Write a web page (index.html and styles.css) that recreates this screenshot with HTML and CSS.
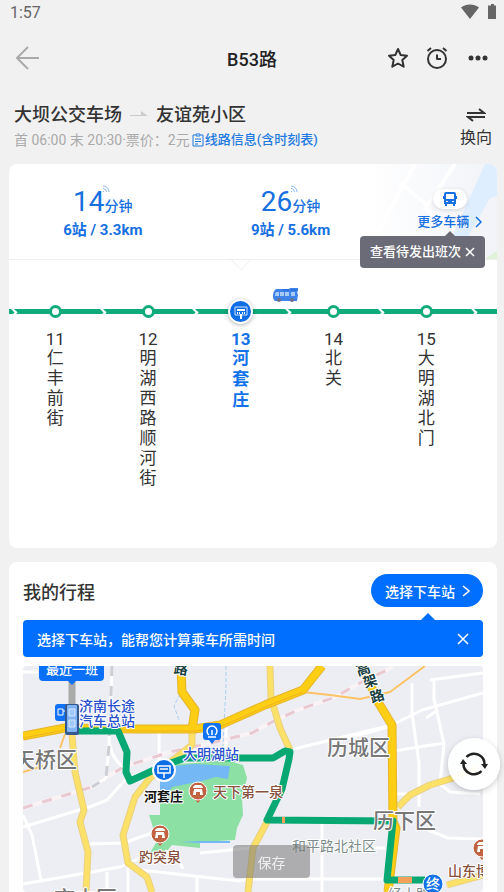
FILE: index.html
```html
<!DOCTYPE html>
<html lang="zh-CN">
<head>
    <meta charset="UTF-8">
    <meta name="viewport" content="width=device-width, initial-scale=1.0">
    <title>B53路</title>
    <link rel="stylesheet" href="styles.css">
</head>
<body>
    <div class="status-bar">
        <span>1:57</span>
        <svg class="status-icons" width="36" height="18" viewBox="0 0 36 18">
            <path d="M1 4.500C6 .5 14 .5 19 4.500L10 16z"/>
            <path d="M29 2.500h2V1h3v1.500h2V16h-8V2.500z"/>
        </svg>
    </div>

    <header class="nav-bar">
        <button class="icon-btn back" aria-label="返回">
            <svg width="24" height="24" viewBox="0 0 24 24"><path d="M12 1 1 12l11 11M1 12h22"/></svg>
        </button>
        <h1>B53路</h1>
        <div class="nav-actions">
            <button class="icon-btn" aria-label="收藏">
                <svg width="22" height="22" viewBox="0 0 22 22"><path d="m11 2 2.700 6 6.300.7-4.700 4.300 1.400 6.700L11 16.500 5.300 19.700l1.400-6.700L2 8.700 8.300 8z"/></svg>
            </button>
            <button class="icon-btn" aria-label="提醒">
                <svg width="22" height="22" viewBox="0 0 22 22"><circle cx="11" cy="12" r="9"/><path d="M11 7.500V12h4M1.500 4 5 1M20.500 4 17 1"/></svg>
            </button>
            <button class="icon-btn dots" aria-label="更多">
                <svg width="20" height="22" viewBox="0 0 20 22"><circle cx="3" cy="11" r="2.500"/><circle cx="10" cy="11" r="2.500"/><circle cx="17" cy="11" r="2.500"/></svg>
            </button>
        </div>
    </header>

    <section class="route">
        <div class="route-info">
            <h2 class="route-name">
                大坝公交车场
                <svg width="18" height="8" viewBox="0 0 18 8"><path d="M0 4h11V0l7 5H0z"/></svg>
                友谊苑小区
            </h2>
            <p class="route-meta">
                <span>首 06:00 末 20:30·票价：2元</span>
                <a href="#timetable" class="route-link"><svg width="12" height="14" viewBox="0 0 12 14"><path d="M3.500 2H1v11h10V2H8.500M4 1h4v2H4zM3 6h6M3 8.500h6M3 11h3"/></svg>线路信息(含时刻表)</a>
            </p>
        </div>
        <button class="swap">
            <svg width="20" height="14" viewBox="0 0 20 14"><path d="M1 5h17l-5-4M19 9H2l5 4"/></svg>
            换向
        </button>
    </section>

    <section class="card line-card">
        <div class="arrivals">
            <svg class="arrivals-bg" width="130" height="95" viewBox="0 0 130 95">
                <defs>
                    <linearGradient id="fade"><stop offset="0" stop-color="#fff"/><stop offset="1" stop-color="#f1f3f8"/></linearGradient>
                </defs>
                <rect width="130" height="95" fill="url(#fade)"/>
                <path d="M48 0 10 69M33 19l27 22M88 0 58 45l30 20" fill="none" stroke="#fff" stroke-width="4"/>
                <path d="M118 0h12v32l-7 2-35 61H75z" fill="#deeeff"/>
                <path d="m118 95 12-8v8z" fill="#e0f2d8"/>
            </svg>
            <button class="arrival">
                <span class="arrival-time"><b>14</b>分钟<svg class="signal" width="8" height="8" viewBox="0 0 8 8"><path d="M1 1a6 6 0 0 1 6 6M1 3.500A3.500 3.500 0 0 1 4.500 7M1 6l1 1"/></svg></span>
                <span class="arrival-dist">6站 / 3.3km</span>
            </button>
            <button class="arrival">
                <span class="arrival-time"><b>26</b>分钟<svg class="signal" width="8" height="8" viewBox="0 0 8 8"><path d="M1 1a6 6 0 0 1 6 6M1 3.500A3.500 3.500 0 0 1 4.500 7M1 6l1 1"/></svg></span>
                <span class="arrival-dist">9站 / 5.6km</span>
            </button>
            <button class="more">
                <span class="more-pill">
                    <svg width="14" height="14" viewBox="0 0 14 14"><path fill-rule="evenodd" d="M3 0h8q2 0 2 2v2h1v3h-1v5h-1v2h-2v-2H4v2H2v-2H1V7H0V4h1V2q0-2 2-2zM3 2v5h8V2zM3 9v1h2V9zM9 9v1h2V9z"/></svg>
                </span>
                <span class="more-text">更多车辆<svg width="7" height="12" viewBox="0 0 7 12"><path d="m1 1 5 5-5 5"/></svg></span>
            </button>
            <div class="tooltip">
                查看待发出班次
                <button class="close" aria-label="关闭"><svg width="10" height="10" viewBox="0 0 10 10"><path d="m1 1 8 8M9 1 1 9"/></svg></button>
            </div>
        </div>

        <div class="line">
            <svg class="bus" width="26" height="15" viewBox="0 0 26 15">
                <path d="M3 1h13l1-1h8v3l-1 1 1 3-1 6H2q-2-1-2-5 0-5 3-7z" fill="#3f83ea"/>
                <path d="M3 4h3v4H2q0-3 1-4zM7 4h4v4H7zM12 4h4v4h-4zM18 4h4v4h-4z" fill="#a9cbfa"/>
                <path d="M10 2h6M18 2h6" stroke="#1c62d8"/>
                <circle cx="6" cy="12" r="2" fill="#6b6f8c"/><circle cx="19" cy="12" r="2" fill="#6b6f8c"/>
            </svg>
            <ol class="stops">
                <li class="stop"><i class="dot"></i><span class="num">11</span><span class="name">仁丰前街</span></li>
                <li class="stop"><i class="dot"></i><span class="num">12</span><span class="name">明湖西路顺河街</span></li>
                <li class="stop current">
                    <i class="dot"><svg width="14" height="14" viewBox="0 0 14 14"><path d="M1 2h12v8H1z" fill="none" stroke="#cfe2ff"/><path d="M3 4h8v2H3zM3 7h1v2H3zM5 7h1v2H5zM8 7h1v2H8zM10 7h1v2h-1zM6 9h2v5H6z" fill="#fff"/></svg></i>
                    <span class="num">13</span><span class="name">河套庄</span>
                </li>
                <li class="stop"><i class="dot"></i><span class="num">14</span><span class="name">北关</span></li>
                <li class="stop"><i class="dot"></i><span class="num">15</span><span class="name">大明湖北门</span></li>
            </ol>
        </div>
    </section>

    <section class="card trip-card">
        <div class="trip-head">
            <h2>我的行程</h2>
            <button class="pick">选择下车站<svg width="8" height="12" viewBox="0 0 8 12"><path d="m1 1 6 5-6 5"/></svg></button>
        </div>
        <div class="tip">
            选择下车站，能帮您计算乘车所需时间
            <button class="close" aria-label="关闭"><svg width="12" height="12" viewBox="0 0 12 12"><path d="m1 1 10 10M11 1 1 11"/></svg></button>
        </div>
        <svg class="map" viewBox="0 0 460 226" preserveAspectRatio="xMidYMin slice">
            <!-- 公园和湖 -->
            <path class="park" d="M137 117 152 98l55-3 13 4 4 13-5 20 1 17-6 13-2 12-35 2v6l-28-3-6 7-16 1 7-12-6-20-2-6h11z"/>
            <path class="lake" d="M137 108l15-8 20-2 35 2-2 13-12-2-14 4-30 6-8 14h-4z"/>
            <path class="lake" d="m157 176 20-1 30 0v2h-30z"/>

            <!-- 小路 -->
            <g class="road minor">
                <path d="M0 161 69 140l15-6 18-20 20-9M0 149l9 20 9 45M0 218l97-17 20-9M65 178l36-1 36-13M84 206v20M105 200v26M136 65v30M203 62v22M0 6h15"/>
                <path d="M142 185q14 6 18 18M117 204l54 6 45 5 10-2h81M174 212v14M177 187l60-6M299 157v69M267 84l102-25 30-15 61-17M307 77l65-18"/>
                <path d="M389 17v30l7 50v44M371 85l50-8M411 13v20l10 45-4 40 10 8 30 2M407 14l53-7M369 128h22M405 164l20 8 35 1M307 213h58M342 182h20M403 52l12-8M373 100v12"/>
            </g>

            <!-- 铁路 -->
            <path class="rail" d="M0 142 69 121l31-20 47-15 45-10 37-9 20-11 26-12 37-13 25-14 27-13 6-4"/>
            <path class="rail-dash" d="M0 142 69 121l31-20 47-15 45-10 37-9 20-11 26-12 37-13 25-14 27-13 6-4"/>
            <path class="rail thin" d="m89 0-3 80-3 32-14 9M86 70q0 20 14 31"/>
            <path class="rail-dash grey" d="m89 0-3 80-3 32-14 9"/>
            <path class="stream" d="M203 0v20l-3 60M157 28l-6 12 5 14"/>

            <!-- 主干道 -->
            <g class="road edge">
                <path d="m49 69 3 37 9 38-4 12 8 30-2 40M169 61v18l-42 33-15 19-12 38 5 28 19 14 5 15M247 0l1 32 9 30 10 22M244 156l-14 26-5 44M375 141l12-12 20-10 20-6 27-11M424 219l36-10"/>
            </g>
            <g class="road light">
                <path d="m49 69 3 37 9 38-4 12 8 30-2 40M169 61v18l-42 33-15 19-12 38 5 28 19 14 5 15M247 0l1 32 9 30 10 22M244 156l-14 26-5 44M375 141l12-12 20-10 20-6 27-11M424 219l36-10"/>
            </g>
            <path class="orange" d="m42 68-5 14M280 26l27 3 30 4 30-7 35-26M0 106l20-6"/>
            <g class="road trunk-edge"><path d="m0 70 42-8 71 1h59l25-4 45-20 38-15 19-24M158 0l1 26 13 18-3 20M339 0l16 36 14 23 1 97 3 6-8 64"/></g>
            <g class="road trunk"><path d="m0 70 42-8 71 1h59l25-4 45-20 38-15 19-24M158 0l1 26 13 18-3 20M339 0l16 36 14 23 1 97 3 6-8 64"/></g>
            <path class="trunk-line" d="m0 72 42-8 71 1h59l25-4 45-20 38-15"/>

            <!-- 公交线路 -->
            <path class="walked" d="M49 14v30"/>
            <path class="path" d="M55 65h40l9 21-1 20 4 9 35-16 20-7h88l12-7 5 1-1 7-7 30-15 31 126 1-6 59h38"/>
            <path class="slow" d="M259 154h3M375 214h14"/>

            <!-- 地名 -->
            <g class="area">
                <text x="-9" y="101">天桥区</text>
                <text x="304" y="89">历城区</text>
                <text x="350" y="162">历下区</text>
                <text x="31" y="240">市中区</text>
            </g>
            <text class="street" x="269" y="185">和平路北社区</text>
            <text class="street" x="365" y="233">经十路</text>
            <g class="highway">
                <text x="151" y="8" transform="rotate(8 158 3)">路</text>
                <text x="333" y="8" transform="rotate(-18 340 3)">高</text>
                <text x="340" y="20" transform="rotate(-18 347 15)">架</text>
                <text x="347" y="35" transform="rotate(-18 354 30)">路</text>
            </g>
            <g class="station">
                <text x="56" y="45">济南长途</text>
                <text x="56" y="60">汽车总站</text>
                <text x="160" y="93">大明湖站</text>
            </g>
            <g class="sight">
                <text x="190" y="131">天下第一泉</text>
                <text x="116" y="196">趵突泉</text>
                <text x="425" y="210">山东博物馆</text>
            </g>
            <text class="here" x="121" y="135">河套庄</text>

            <!-- 景点 -->
            <g id="temple">
                <path d="m170 131 5 6 5-6z" fill="#c16340"/>
                <circle cx="175" cy="125" r="9" fill="#c16340" stroke="#fff"/>
                <path d="m170 121 2-2h6l2 2v1h-10zM171 123h8l1 6h-3v-3h-4v3h-3z" fill="#fff"/>
            </g>
            <use href="#temple" x="-38" y="43"/>
            <use href="#temple" x="284" y="57"/>

            <!-- 车站标记 -->
            <path d="M183 57h12q3 0 3 3v11q0 3-3 3h-3l-3 4-3-4h-3q-3 0-3-3V60q0-3 3-3z" fill="#1272f5"/>
            <path d="M186 69a5 5 0 1 1 6 0M189 64v5M185 71h8" fill="none" stroke="#fff" stroke-width="1.500"/>
            <rect x="32" y="38" width="16" height="17" rx="3" fill="#1272f5"/>
            <path d="M35 43h5v6h-5zM40 45h3" fill="none" stroke="#fff"/>
            <circle cx="141" cy="104" r="11" fill="#0f6de6" stroke="#fff" stroke-width="2"/>
            <path d="M135 100h12v7h-12zM137 103h8M141 107v5" fill="none" stroke="#fff" stroke-width="1.500"/>

            <!-- 最近的车 -->
            <rect x="42" y="38" width="14" height="31" rx="2" fill="#35598f"/>
            <rect x="44" y="39" width="10" height="27" rx="1" fill="#82b5f8"/>
            <path d="M46 43h6v7h-6zM46 54h6v7h-6z" fill="#9fc8ff" stroke="#d6e7ff"/>
            <path d="M16-9h65v20q0 4-4 4H53l-4 4-4-4H20q-4 0-4-4z" fill="#0a70fa"/>
            <text class="next-bus" x="23" y="8">最近一班</text>

            <circle cx="410" cy="218" r="10" fill="#1272e8" stroke="#fff"/>
            <text class="end" x="403" y="223">终</text>
        </svg>
    </section>

    <button class="refresh" aria-label="刷新">
        <svg width="28" height="28" viewBox="0 0 28 28"><path d="M6.500 7A10.500 10.500 0 0 1 24.500 15M21.500 21A10.500 10.500 0 0 1 3.500 13" fill="none" stroke="#222" stroke-width="2.500"/><path d="M21 14h7l-3 5zM0 14h7l-4-5z" fill="#222"/></svg>
    </button>
    <button class="save">保存</button>
</body>
</html>
```

FILE: styles.css
```css
* {
    box-sizing: border-box;
}
body {
    display: flex;
    flex-direction: column;
    height: 100vh;
    margin: 0;
    overflow: hidden;
    background: #f1f1f1;
    color: #333;
    font-family: Roboto, "Noto Sans CJK SC", sans-serif;
    font-size: 14px;
}
h1, h2, p, ol {
    margin: 0;
    padding: 0;
}
h1, h2 {
    font-size: 18px;
    font-weight: 500;
}
button {
    padding: 0;
    border: none;
    background: none;
    color: inherit;
    font: inherit;
    cursor: pointer;
}
svg {
    display: block;
    flex: none;
}

/* 顶部 */
.status-bar {
    display: flex;
    justify-content: space-between;
    height: 32px;
    padding: 3px 8px 0 10px;
    color: #666;
    font-size: 16px;
    line-height: 20px;
}
.status-icons {
    fill: #666;
}
.nav-bar {
    display: grid;
    grid-template-columns: 1fr auto 1fr;
    align-items: center;
    height: 52px;
    padding: 0 16px;
}
.nav-bar h1 {
    color: #222;
}
.nav-actions {
    display: flex;
    justify-content: flex-end;
    gap: 17px;
}
.icon-btn svg {
    fill: none;
    stroke: #333;
    stroke-width: 2;
    stroke-linejoin: round;
}
.icon-btn.back {
    justify-self: start;
}
.icon-btn.back svg {
    stroke: #aaa;
}
.icon-btn.dots {
    padding-left: 3px;
}
.icon-btn.dots svg {
    fill: #333;
    stroke: none;
}

/* 线路信息 */
.route {
    display: flex;
    justify-content: space-between;
    height: 80px;
    padding: 18px 12px 0 14px;
}
.route-name {
    display: flex;
    align-items: center;
    gap: 8px;
    line-height: 26px;
}
.route-name svg {
    fill: #ccc;
}
.route-meta {
    display: flex;
    align-items: center;
    gap: 2px;
    color: #aaa;
    line-height: 24px;
}
.route-link {
    display: flex;
    align-items: center;
    gap: 1px;
    color: #1f7be0;
    font-size: 13px;
    font-weight: 500;
    text-decoration: none;
}
.route-link svg {
    fill: none;
    stroke: #1f7be0;
}
.swap {
    display: flex;
    flex-direction: column;
    align-items: center;
    gap: 4px;
    padding-top: 6px;
    font-size: 16px;
    line-height: 24px;
}
.swap svg {
    fill: none;
    stroke: #333;
    stroke-width: 2;
}

.card {
    margin: 0 7px 14px 9px;
    border-radius: 8px;
    background: #fff;
}

/* 到站时间 */
.arrivals {
    position: relative;
    display: grid;
    grid-template-columns: 5fr 5fr 3fr;
    height: 96px;
    border-bottom: 1px solid #f0f0f0;
    color: #1670e0;
}
.arrivals-bg {
    position: absolute;
    top: 0;
    right: 0;
    border-top-right-radius: 8px;
}
.arrival {
    display: flex;
    flex-direction: column;
    align-items: center;
    padding-top: 23px;
}
.arrival-time {
    position: relative;
    font-weight: 500;
    line-height: 30px;
}
.arrival-time b {
    font-size: 28px;
    font-weight: 400;
}
.signal {
    position: absolute;
    top: -2px;
    left: 29px;
    fill: none;
    stroke: #8dbaf0;
}
.arrival-dist {
    font-size: 15px;
    font-weight: 700;
    line-height: 18px;
}
.more {
    position: relative;
    display: flex;
    flex-direction: column;
    align-items: center;
    gap: 3px;
    padding: 25px 2px 0 20px;
}
.more-pill {
    padding: 3px 10px;
    border-radius: 10px;
    background: #fff;
    box-shadow: 0 1px 4px rgba(0, 0, 0, 0.15);
}
.more-pill svg {
    fill: #1670e0;
}
.more-text {
    display: flex;
    align-items: center;
    gap: 6px;
    font-size: 13px;
    font-weight: 500;
    line-height: 20px;
}
.more-text svg,
.close svg,
.pick svg {
    fill: none;
    stroke: currentColor;
    stroke-width: 1.5px;
}
.tooltip {
    position: absolute;
    top: 72px;
    right: 12px;
    z-index: 1;
    display: flex;
    align-items: center;
    gap: 4px;
    height: 32px;
    padding: 0 10px;
    border-radius: 4px;
    background: #6b6b78;
    color: #fff;
    font-size: 13px;
    font-weight: 500;
    line-height: 16px;
}
.tooltip::before,
.tip::before {
    content: "";
    position: absolute;
    bottom: 100%;
    border: 5px solid transparent;
    border-top: none;
    border-bottom-color: #6b6b78;
}
.tooltip::before {
    right: 30px;
}

/* 站点列表 */
.line {
    position: relative;
    height: 288px;
    padding-top: 38px;
    overflow: hidden;
}
.line::before {
    content: "";
    position: absolute;
    top: -9px;
    left: 46%;
    width: 14px;
    height: 14px;
    border: 1px solid #f0f0f0;
    background: #fff;
    transform: rotate(45deg);
}
.bus {
    position: absolute;
    top: 28px;
    left: 54%;
}
.stops {
    display: grid;
    grid-template-columns: repeat(5, 19%);
    background: linear-gradient(#0fab7a, #0fab7a) 0 11px / 100% 5px no-repeat;
    list-style: none;
}
.stop {
    position: relative;
    display: flex;
    flex-direction: column;
    align-items: center;
    font-size: 17px;
    line-height: 20px;
}
.stop::after,
.stop:first-child::before {
    content: "";
    position: absolute;
    top: 11px;
    right: -3px;
    width: 5px;
    height: 5px;
    border: solid #fff;
    border-width: 2px 2px 0 0;
    transform: rotate(45deg);
}
.stop:first-child::before {
    right: auto;
    left: 0;
}
.dot {
    width: 13px;
    height: 13px;
    margin: 7px 0;
    border: 3px solid #0fab7a;
    border-radius: 50%;
    background: #fff;
}
.num {
    margin-top: 5px;
    line-height: 18px;
}
.name {
    width: 17px;
    text-align: center;
    word-break: break-all;
}
.current {
    color: #1272ea;
    font-weight: 700;
}
.current .dot {
    display: grid;
    place-items: center;
    width: 25px;
    height: 25px;
    margin: 1px 0;
    border: 2px solid #fff;
    background: #0f6de6;
    box-shadow: 0 1px 4px rgba(0, 0, 0, 0.3);
}
.current .name {
    line-height: 21px;
}

/* 我的行程 */
.trip-card {
    display: flex;
    flex: 1;
    flex-direction: column;
    min-height: 0;
    margin-bottom: 0;
    padding: 12px 14px 0;
    border-radius: 8px 8px 0 0;
}
.trip-head {
    display: flex;
    align-items: center;
    justify-content: space-between;
    margin-bottom: 13px;
}
.pick {
    display: flex;
    align-items: center;
    gap: 7px;
    height: 33px;
    padding: 0 13px 0 14px;
    border-radius: 17px;
    background: #006eff;
    color: #fff;
    font-weight: 500;
}
.tip {
    position: relative;
    display: flex;
    align-items: center;
    justify-content: space-between;
    flex: none;
    height: 37px;
    margin-bottom: 9px;
    padding: 0 14px;
    border-radius: 4px;
    background: #006eff;
    color: #fff;
    font-weight: 500;
}
.tip::before {
    right: 48px;
    border-width: 7px;
    border-bottom-color: #006eff;
}

/* 地图 */
.map {
    flex: 1;
    width: 100%;
    min-height: 0;
    border-radius: 4px;
    background: #edeef3;
}
.map text {
    font-size: 14px;
    font-weight: 500;
    paint-order: stroke;
    stroke: #fff;
    stroke-width: 2px;
    stroke-linejoin: round;
}
.map .area text {
    fill: #777;
    font-size: 21px;
}
.map .street {
    fill: #7b8c8a;
    font-weight: 400;
}
.map .highway text {
    fill: #17403f;
    font-weight: 700;
}
.map .station text {
    fill: #2850cc;
}
.map .sight text {
    fill: #87513d;
}
.map .here {
    fill: #111;
    font-size: 13px;
    font-weight: 700;
}
.map .next-bus,
.map .end {
    fill: #fff;
    font-size: 13px;
    stroke: none;
}
.map .end {
    font-size: 14px;
}
.park {
    fill: #8ce0a3;
}
.lake {
    fill: #74b8f5;
}
.road,
.rail,
.rail-dash,
.stream,
.orange,
.walked,
.path,
.slow,
.trunk-line {
    fill: none;
    stroke-linejoin: round;
}
.minor {
    stroke: #fff;
    stroke-width: 3;
}
.edge {
    stroke: #ead080;
    stroke-width: 7;
}
.light {
    stroke: #fce169;
    stroke-width: 5;
}
.trunk-edge {
    stroke: #e6b52e;
    stroke-width: 9;
}
.trunk {
    stroke: #fdce13;
    stroke-width: 7;
}
.trunk-line {
    stroke: #eeb220;
}
.rail {
    stroke: #f9f3f6;
    stroke-width: 4;
}
.rail.thin {
    stroke: #fff;
    stroke-width: 3;
}
.rail-dash {
    stroke: #e9c9d1;
    stroke-width: 3;
    stroke-dasharray: 10 10;
}
.rail-dash.grey {
    stroke: #ccced4;
}
.stream {
    stroke: #a8d0f0;
    stroke-dasharray: 4 2;
}
.orange {
    stroke: #fbc366;
    stroke-width: 2;
}
.walked {
    stroke: #aaa;
    stroke-width: 7;
}
.path {
    stroke: #08a873;
    stroke-width: 7;
}
.slow {
    stroke: #f7a05a;
    stroke-width: 6;
}

/* 悬浮按钮 */
.refresh {
    position: fixed;
    right: 4px;
    bottom: 102px;
    display: grid;
    place-items: center;
    width: 52px;
    height: 52px;
    border-radius: 50%;
    background: rgba(255, 255, 255, 0.95);
    box-shadow: 0 2px 6px rgba(0, 0, 0, 0.2);
}
.save {
    position: fixed;
    right: 194px;
    bottom: 14px;
    width: 77px;
    height: 33px;
    border-radius: 4px;
    background: rgba(120, 120, 120, 0.55);
    color: #eee;
}
```
